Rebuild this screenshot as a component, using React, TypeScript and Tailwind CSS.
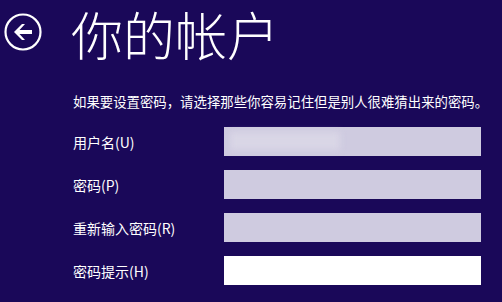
const fields = [
  { label: "用户名(U)", bg: "bg-[#cfcbe0]", blur: true },
  { label: "密码(P)", bg: "bg-[#cfcbe0]" },
  { label: "重新输入密码(R)", bg: "bg-[#cfcbe0]" },
  { label: "密码提示(H)", bg: "bg-white" },
];

const BackIcon = () => (
  <svg width="38" height="38" viewBox="0 0 38 38" className="mb-[4px] shrink-0">
    <circle cx="19" cy="19" r="17.5" fill="none" stroke="white" strokeWidth="2.2" />
    <path
      d="M10 19 L18 11 L21 11 L15.5 17 L28 17 L28 21 L15.5 21 L21 27 L18 27 Z"
      fill="white"
    />
  </svg>
);

export default function App() {
  return (
    <div
      className="w-[502px] h-[302px] bg-[#1a0859] text-white overflow-hidden"
      style={{ fontFamily: '"Noto Sans CJK SC", "Noto Sans", sans-serif' }}
    >
      <div className="flex items-center pl-[4px]">
        <BackIcon />
        <h1 className="ml-[29px] shrink-0 pr-[8px] text-[52px] leading-[68px] font-light whitespace-nowrap">
          你的帐户
        </h1>
      </div>
      <div className="pl-[73px]">
        <p className="mt-[24px] text-[13.4px] leading-[18px] whitespace-nowrap">
          如果要设置密码，请选择那些你容易记住但是别人很难猜出来的密码。
        </p>
        <div className="mt-[17px] flex flex-col gap-[14px]">
          {fields.map((f) => (
            <div key={f.label} className="flex items-center h-[29px]">
              <span className="w-[151px] text-[14px] leading-[18px]">{f.label}</span>
              <div className={`w-[257px] h-[29px] ${f.bg} relative`}>
                {f.blur && (
                  <div className="absolute left-[6px] top-[5px] w-[110px] h-[18px] bg-[#d9d6e6] blur-[3px]" />
                )}
              </div>
            </div>
          ))}
        </div>
      </div>
    </div>
  );
}
